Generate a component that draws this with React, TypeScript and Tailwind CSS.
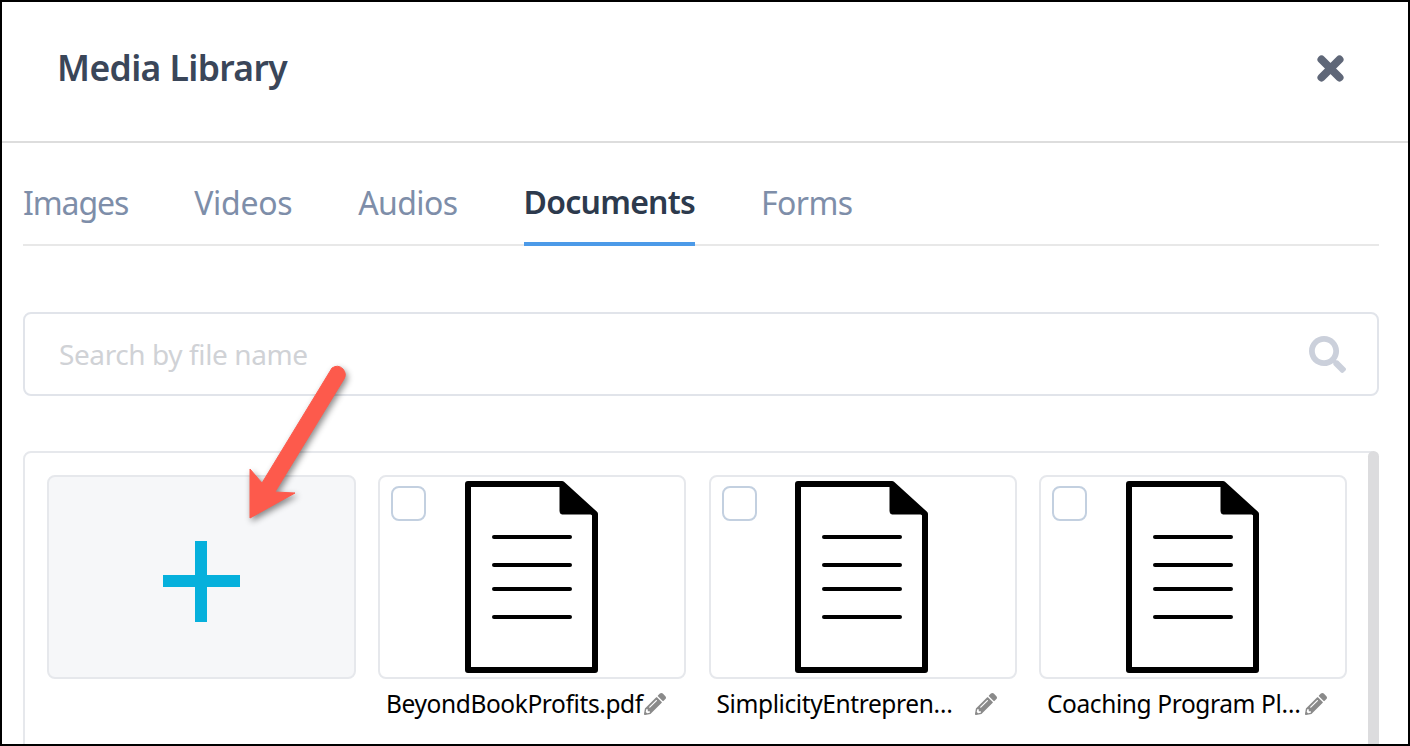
import { FaPencilAlt, FaSearch } from 'react-icons/fa';

const tabs = [
  { name: 'Images', tracking: 'tracking-[-1.1px]' },
  { name: 'Videos', tracking: 'tracking-[-0.3px]' },
  { name: 'Audios', tracking: 'tracking-[-0.6px]' },
  { name: 'Documents', tracking: 'tracking-[-0.75px]' },
  { name: 'Forms', tracking: 'tracking-[-0.6px]' },
];

const files = ['BeyondBookProfits.pdf', 'SimplicityEntrepren…', 'Coaching Program Pl…'];

function FileIcon() {
  return (
    <svg width="133" height="192" viewBox="0 0 133 192">
      <path d="M3 3H97L130 33V189H3Z" fill="white" stroke="black" strokeWidth="6" strokeLinejoin="round" />
      <path d="M95 3L131 33H97Q95 33 95 30Z" fill="black" stroke="black" strokeWidth="1" />
      {[56, 84, 108, 136].map((y) => (
        <line key={y} x1="29" x2="105" y1={y} y2={y} stroke="black" strokeWidth="4" strokeLinecap="round" />
      ))}
    </svg>
  );
}

export default function App() {
  return (
    <div className="relative h-[746px] w-[1410px] overflow-hidden border-2 border-black bg-white font-['Noto_Sans',sans-serif]">
      {/* Header */}
      <div className="flex h-[141px] items-center justify-between border-b-2 border-[#dddddd] pl-[55px] pr-[64px]">
        <h1 className="-mt-[8px] text-[35.5px] font-semibold tracking-[-0.6px] text-[#3a4659]">Media Library</h1>
        <svg width="27" height="27" viewBox="0 0 27 27" className="-mt-[6px]">
          <path d="M4.5 4.5L22.5 22.5M22.5 4.5L4.5 22.5" stroke="#5f6778" strokeWidth="8" strokeLinecap="round" />
        </svg>
      </div>

      <div className="pl-[21px] pr-[29px]">
        {/* Tabs */}
        <div className="flex h-[103px] gap-[66px] border-b-2 border-[#e8e8e8]">
          {tabs.map((tab) => (
            <div
              key={tab.name}
              className={
                tab.name === 'Documents'
                  ? `flex h-[103px] items-center border-b-4 border-[#4c9ae8] pt-[18px] text-[32px] font-semibold text-[#2d3a4d] ${tab.tracking}`
                  : `flex h-[103px] items-center pt-[17px] text-[32px] text-[#7e8ea9] ${tab.tracking}`
              }
            >
              {tab.name}
            </div>
          ))}
        </div>

        {/* Search */}
        <div className="mt-[66px] flex h-[84px] items-center justify-between rounded-lg border-2 border-[#e1e4ea] pl-[34px] pr-[31px]">
          <span className="text-[28px] tracking-[-0.4px] text-[#d0d2d6]">Search by file name</span>
          <FaSearch className="text-[37px] text-[#cbd0db]" />
        </div>

        {/* Files */}
        <div className="relative mt-[55px] flex h-[321px] gap-[22.5px] rounded-lg border-2 border-[#e6e8ec] pl-[22px] pt-[21px]">
          <div className="absolute -right-[2px] -top-[2px] h-[321px] w-[11px] rounded-t-lg bg-[#dcdcde]" />
          <div className="mt-[1px] flex h-[204px] w-[308.5px] items-center justify-center rounded-lg border-2 border-[#e6e8ec] bg-[#f6f7f9] pt-2">
            <svg width="77" height="81" viewBox="0 0 77 81">
              <path d="M32 0H44V34H77V46H44V81H32V46H0V34H32Z" fill="#06b0dc" />
            </svg>
          </div>
          {files.map((name) => (
            <div key={name} className="mt-[1px] w-[308px]">
              <div className="relative flex h-[204px] justify-center rounded-lg border-2 border-[#e6e8ec] pr-[2px] pt-1">
                <div className="absolute left-[11px] top-[9px] h-[35px] w-[35px] rounded-lg border-2 border-[#c3d0e0] bg-white" />
                <FileIcon />
              </div>
              <div className="mt-[8px] flex items-center pl-[8px]">
                <span className="w-[258px] whitespace-nowrap text-[24.5px] leading-[34px] tracking-[-0.4px] text-black">{name}</span>
                <FaPencilAlt className="text-[22px] text-[#8a8a8a]" />
              </div>
            </div>
          ))}
        </div>
      </div>

      {/* Annotation arrow */}
      <svg
        className="absolute left-[238px] top-[358px] drop-shadow-[2px_3px_3px_rgba(0,0,0,0.45)]"
        width="120"
        height="170"
        viewBox="238 358 120 170"
      >
        <path
          d="M330 366Q336 362 341 367Q345 372 342 377L273 490L293 491L248 516L248 467L260 481Z"
          fill="#fd5a4c"
          stroke="#fd5a4c"
          strokeWidth="1"
          strokeLinejoin="round"
        />
      </svg>
    </div>
  );
}
